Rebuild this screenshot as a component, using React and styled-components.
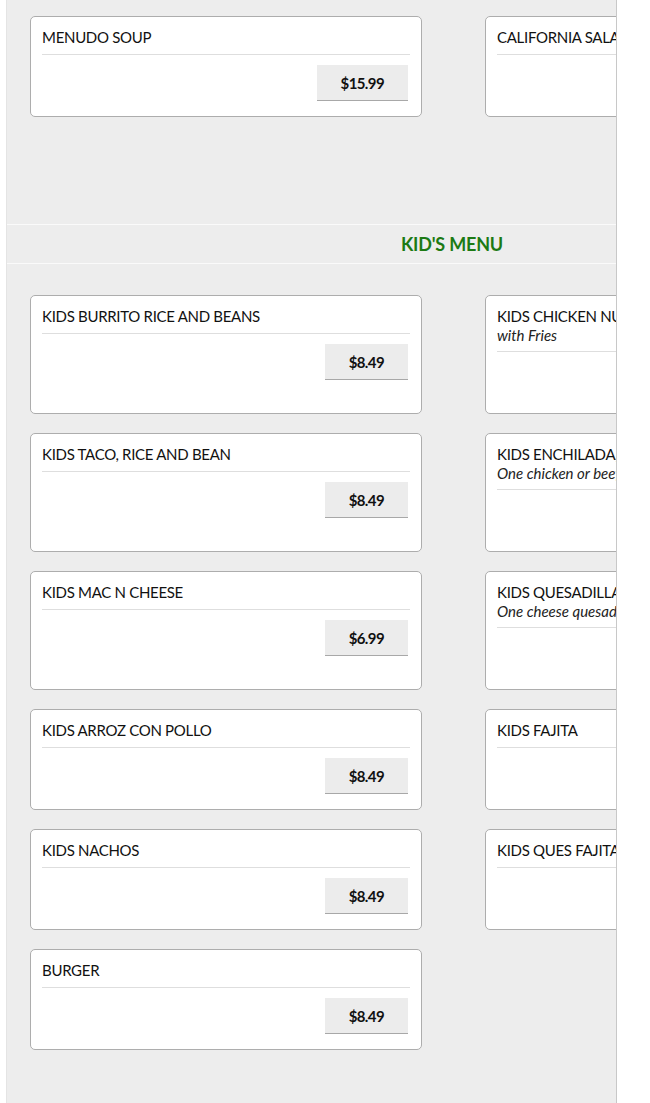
import React from "react";
import styled, { createGlobalStyle } from "styled-components";

const GlobalStyle = createGlobalStyle`
  html, body {
    margin: 0;
    padding: 0;
    background: #ffffff;
    font-family: "Lato", "Open Sans", sans-serif;
    color: #111;
  }
`;

const Viewport = styled.div`
  margin-left: 6px;
  width: 609px;
  height: 1103px;
  background: #ededed;
  border-left: 1px solid #e4e4e4;
  border-right: 1px solid #c8c8c8;
  overflow: hidden;
`;

const Menu = styled.div`
  width: 890px;
`;

const Section = styled.section`
  padding: ${p => p.pad};
`;

const Grid = styled.div`
  display: grid;
  grid-template-columns: 392px 392px;
  column-gap: 63px;
  row-gap: 19px;
  padding: 0 23px;
`;

const SectionHeader = styled.div`
  border-top: 1px solid #fafafa;
  border-bottom: 1px solid #fafafa;
  height: 38px;
  display: flex;
  align-items: center;
  justify-content: center;
  color: #1c7a14;
  font-size: 18px;
  font-weight: 700;
  letter-spacing: -0.2px;
`;

const Card = styled.div`
  background: #fff;
  border: 1px solid #adadad;
  border-radius: 5px;
  padding: 11px 11px 15px 11px;
  display: flex;
  flex-direction: column;
`;

const Title = styled.div`
  font-size: 15px;
  line-height: 19px;
  white-space: nowrap;
  letter-spacing: -0.3px;
`;

const Desc = styled.div`
  font-size: 15px;
  line-height: 18px;
  font-style: italic;
  white-space: nowrap;
  color: #222;
`;

const Rule = styled.div`
  border-top: 1px solid #dedede;
  margin: 7px 0 10px;
`;

const PriceRow = styled.div`
  display: flex;
  justify-content: flex-end;
  padding-right: 2px;
`;

const Price = styled.button`
  background: #ececec;
  border: none;
  border-bottom: 1px solid #a8a8a8;
  height: 36px;
  padding: 0 24px;
  font-family: inherit;
  font-size: 15px;
  font-weight: 700;
  letter-spacing: -0.6px;
  color: #111;
  cursor: pointer;
`;

const MenuCard = ({ item }) => (
  <Card>
    <Title>{item.name}</Title>
    {item.desc && <Desc>{item.desc}</Desc>}
    <Rule />
    <PriceRow>
      <Price>{item.price}</Price>
    </PriceRow>
  </Card>
);

const soups = [
  { name: "MENUDO SOUP", price: "$15.99" },
  { name: "CALIFORNIA SALAD", price: "$12.99" },
];

const kids = [
  { name: "KIDS BURRITO RICE AND BEANS", price: "$8.49" },
  { name: "KIDS CHICKEN NUGGETS", desc: "with Fries", price: "$8.49" },
  { name: "KIDS TACO, RICE AND BEAN", price: "$8.49" },
  { name: "KIDS ENCHILADA, RICE AND BEAN", desc: "One chicken or beef enchilada", price: "$8.49" },
  { name: "KIDS MAC N CHEESE", price: "$6.99" },
  { name: "KIDS QUESADILLA", desc: "One cheese quesadilla", price: "$8.49" },
  { name: "KIDS ARROZ CON POLLO", price: "$8.49" },
  { name: "KIDS FAJITA", price: "$8.49" },
  { name: "KIDS NACHOS", price: "$8.49" },
  { name: "KIDS QUES FAJITA", price: "$8.49" },
  { name: "BURGER", price: "$8.49" },
];

export default function App() {
  return (
    <>
      <GlobalStyle />
      <Viewport>
        <Menu>
          <Section pad="16px 0 107px">
            <Grid>
              {soups.map(item => (
                <MenuCard key={item.name} item={item} />
              ))}
            </Grid>
          </Section>
          <SectionHeader>KID'S MENU</SectionHeader>
          <Section pad="31px 0 40px">
            <Grid>
              {kids.map(item => (
                <MenuCard key={item.name} item={item} />
              ))}
            </Grid>
          </Section>
        </Menu>
      </Viewport>
    </>
  );
}
